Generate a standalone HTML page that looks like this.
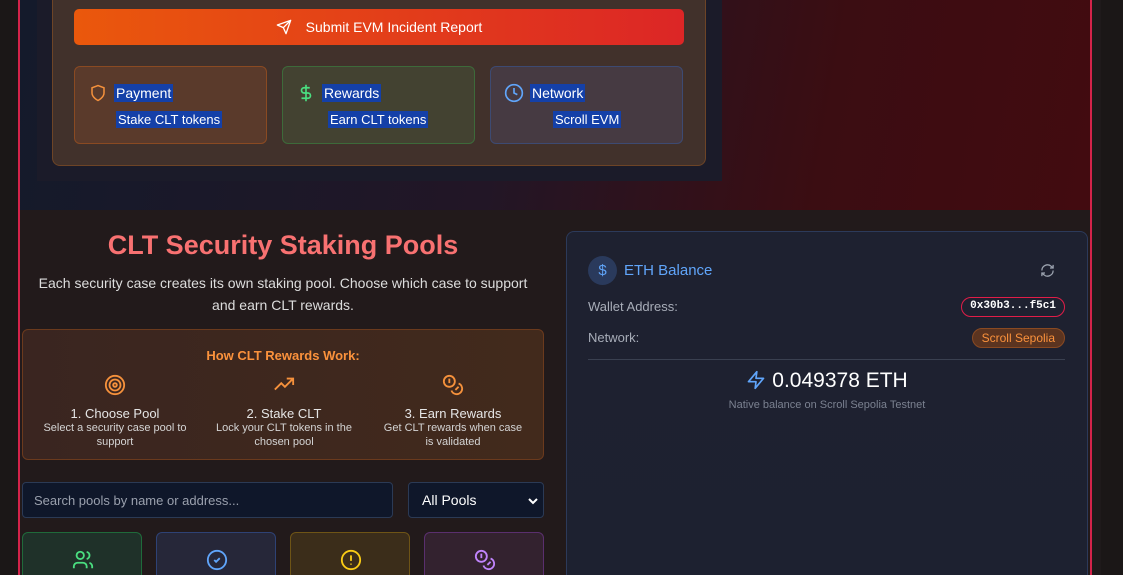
<!DOCTYPE html>
<html><head><meta charset="utf-8"><style>
*{box-sizing:border-box;margin:0;padding:0}
html,body{width:1123px;height:575px;overflow:hidden}
body{background:#1b1717;font-family:"Liberation Sans",sans-serif;position:relative;color:#fff}
.abs{position:absolute}
.frame{left:18px;top:0;width:1074px;height:575px;border-left:2px solid #d4234a;border-right:2px solid #d4234a;background:#221a1b}
.rs{left:1092px;top:0;width:9px;height:575px;background:#1f1a1b}
.top{left:20px;top:0;width:1070px;height:210px;background:linear-gradient(100deg,#141a2b 0%,#221626 45%,#3b0d12 75%,#420b10 100%)}
.inner{left:37px;top:0;width:685px;height:181px;background:#1b1b29}
.card{left:52px;top:-10px;width:654px;height:176px;background:#41312b;border:1px solid #6d4426;border-radius:8px}
.btn{left:74px;top:9px;width:610px;height:36px;border-radius:5px;background:linear-gradient(90deg,#ea580c,#dc2626);display:flex;align-items:center;justify-content:center;font-size:14px;gap:14px}
.box{top:66px;width:193px;height:78px;border-radius:6px;border:1px solid}
.sel{background:#1440a8;color:#fff}
.bt{position:absolute;top:17px;left:39px;font-size:14px;padding:1px 2px}
.bs{position:absolute;top:44px;font-size:13px;padding:1px 2px}
.ic{position:absolute;left:14px;top:16px}
h1{position:absolute;left:22px;width:522px;top:230px;text-align:center;font-size:27px;color:#f87171;font-weight:bold}
.sub{left:30px;width:506px;top:272px;text-align:center;font-size:14px;line-height:22px;color:#ddd}
.how{left:22px;top:329px;width:522px;height:131px;border:1px solid #6b3a1d;border-radius:6px;background:linear-gradient(90deg,#3a2520,#422a1c)}
.how h3{position:absolute;top:18px;width:100%;text-align:center;font-size:13px;color:#fb923c;font-weight:bold}
.step{position:absolute;top:44px;width:180px;text-align:center}
.step .t{font-size:13px;color:#e5e5e5;margin-top:5px}
.step .d{font-size:11px;color:#d4d4d4;line-height:14px}
.search{left:22px;top:482px;width:371px;height:36px;background:#0f172a;border:1px solid #2b3a55;border-radius:4px;font-size:13px;color:#9aa0ad;padding:10px 11px}
.select{left:408px;top:482px;width:136px;height:36px;background:#0f172a;border:1px solid #2b3a55;border-radius:4px;font-size:14px;color:#fff;padding:9px 13px}
.st{top:532px;width:120px;height:60px;border-radius:6px;border:1px solid}
.eth{left:566px;top:231px;width:522px;height:360px;background:linear-gradient(180deg,#1e2130,#1d2130);border:1px solid #2c3a5a;border-radius:8px}
.row{position:absolute;left:21px;font-size:13px;color:#a8adb8}
</style></head><body>
<div class="abs frame"></div>
<div class="abs rs"></div>
<div class="abs top"></div>
<div class="abs inner"></div>
<div class="abs card"></div>
<div class="abs btn"><svg width="16" height="16" viewBox="0 0 24 24" fill="none" stroke="#fff" stroke-width="2" stroke-linejoin="round"><path d="M22 2L11 13M22 2l-7 20-4-9-9-4z"/></svg><span>Submit EVM Incident Report</span></div>

<div class="abs box" style="left:74px;background:#5a3a2b;border-color:#8a4a22">
<svg class="ic" width="18" height="20" viewBox="0 0 24 24" fill="none" stroke="#f5913c" stroke-width="2"><path d="M12 22s8-4 8-10V5l-8-3-8 3v7c0 6 8 10 8 10z"/></svg>
<span class="bt sel">Payment</span><span class="bs sel" style="left:41px">Stake CLT tokens</span></div>
<div class="abs box" style="left:282px;background:#434231;border-color:#3d6a3a">
<svg class="ic" width="18" height="22" viewBox="0 0 24 24" fill="none" stroke="#4ade80" stroke-width="2.2" style="top:15px"><path d="M12 1v22M17 5H9.5a3.5 3.5 0 000 7h5a3.5 3.5 0 010 7H6"/></svg>
<span class="bt sel">Rewards</span><span class="bs sel" style="left:45px">Earn CLT tokens</span></div>
<div class="abs box" style="left:490px;background:#463a42;border-color:#3d4a72">
<svg class="ic" width="20" height="20" viewBox="0 0 24 24" fill="none" stroke="#60a5fa" stroke-width="2" style="left:13px"><circle cx="12" cy="12" r="10"/><path d="M12 6v6l4 2"/></svg>
<span class="bt sel">Network</span><span class="bs sel" style="left:62px">Scroll EVM</span></div>

<h1>CLT Security Staking Pools</h1>
<div class="abs sub">Each security case creates its own staking pool. Choose which case to support and earn CLT rewards.</div>

<div class="abs how"><h3>How CLT Rewards Work:</h3>
<div class="step" style="left:2px"><svg width="22" height="22" viewBox="0 0 24 24" fill="none" stroke="#f5913c" stroke-width="2"><circle cx="12" cy="12" r="10"/><circle cx="12" cy="12" r="6"/><circle cx="12" cy="12" r="2"/></svg><div class="t">1. Choose Pool</div><div class="d">Select a security case pool to<br>support</div></div>
<div class="step" style="left:171px"><svg width="22" height="22" viewBox="0 0 24 24" fill="none" stroke="#f5913c" stroke-width="2"><path d="M2 17l7-7 4 4 9-9M15 5h7v7"/></svg><div class="t">2. Stake CLT</div><div class="d">Lock your CLT tokens in the<br>chosen pool</div></div>
<div class="step" style="left:340px"><svg width="22" height="22" viewBox="0 0 24 24" fill="none" stroke="#f5913c" stroke-width="2"><circle cx="8" cy="8" r="6"/><path d="M18.1 10.4A6 6 0 1110.3 18M7 6h1v4M16.7 13.9l.7.7-2.8 2.8"/></svg><div class="t">3. Earn Rewards</div><div class="d">Get CLT rewards when case<br>is validated</div></div>
</div>

<div class="abs search">Search pools by name or address...</div>
<div class="abs select">All Pools<svg style="position:absolute;right:5px;top:14px" width="10" height="8" viewBox="0 0 10 8"><path d="M1 2l4 4 4-4" stroke="#fff" stroke-width="2" fill="none"/></svg></div>

<div class="abs st" style="left:22px;background:#1f3129;border-color:#1f6a3a"><svg style="position:absolute;left:49px;top:16px" width="22" height="22" viewBox="0 0 24 24" fill="none" stroke="#4ade80" stroke-width="2"><path d="M16 21v-2a4 4 0 00-4-4H6a4 4 0 00-4 4v2"/><circle cx="9" cy="7" r="4"/><path d="M22 21v-2a4 4 0 00-3-3.9M16 3.1a4 4 0 010 7.8"/></svg></div>
<div class="abs st" style="left:156px;background:#262739;border-color:#2e4275"><svg style="position:absolute;left:49px;top:16px" width="22" height="22" viewBox="0 0 24 24" fill="none" stroke="#60a5fa" stroke-width="2"><circle cx="12" cy="12" r="10"/><path d="M9 12l2 2 4-4"/></svg></div>
<div class="abs st" style="left:290px;background:#3b2d1a;border-color:#6e5416"><svg style="position:absolute;left:49px;top:16px" width="22" height="22" viewBox="0 0 24 24" fill="none" stroke="#facc15" stroke-width="2"><circle cx="12" cy="12" r="10"/><path d="M12 7v6M12 16v1"/></svg></div>
<div class="abs st" style="left:424px;background:#33222f;border-color:#5a2f6e"><svg style="position:absolute;left:49px;top:16px" width="22" height="22" viewBox="0 0 24 24" fill="none" stroke="#c084fc" stroke-width="2"><circle cx="8" cy="8" r="6"/><path d="M18.1 10.4A6 6 0 1110.3 18M7 6h1v4M16.7 13.9l.7.7-2.8 2.8"/></svg></div>

<div class="abs eth">
<div style="position:absolute;left:21px;top:24px;width:29px;height:29px;border-radius:50%;background:#2a3a5c;color:#60a5fa;font-size:15px;text-align:center;line-height:29px">$</div>
<div style="position:absolute;left:57px;top:30px;font-size:15px;color:#60a5fa">ETH Balance</div>
<svg style="position:absolute;left:473px;top:31px" width="15" height="15" viewBox="0 0 24 24" fill="none" stroke="#9ca3af" stroke-width="2"><path d="M3 12a9 9 0 0115-6.7L21 8M21 3v5h-5M21 12a9 9 0 01-15 6.7L3 16M3 21v-5h5"/></svg>
<div class="row" style="top:67px">Wallet Address:</div>
<div style="position:absolute;right:22px;top:65px;height:20px;padding:0 8px;border:1.5px solid #e11d48;border-radius:10px;font-family:'Liberation Mono',monospace;font-weight:bold;font-size:11px;line-height:17px;color:#fff">0x30b3...f5c1</div>
<div class="row" style="top:98px">Network:</div>
<div style="position:absolute;right:22px;top:96px;height:20px;padding:0 9px;background:#5b3420;border:1px solid #8a4a22;border-radius:10px;font-size:12px;line-height:18px;color:#fb923c">Scroll Sepolia</div>
<div style="position:absolute;left:21px;right:22px;top:127px;border-top:1px solid #3a4050"></div>
<div style="position:absolute;left:0;width:100%;top:137px;text-align:center;font-size:21px;color:#fff"><svg style="vertical-align:-3px;margin-right:6px" width="20" height="20" viewBox="0 0 24 24" fill="none" stroke="#60a5fa" stroke-width="2" stroke-linejoin="round"><path d="M13 2L3 14h9l-1 8 10-12h-9z"/></svg>0.049378 ETH</div>
<div style="position:absolute;left:0;width:100%;top:167px;text-align:center;font-size:11px;color:#7b8190">Native balance on Scroll Sepolia Testnet</div>
</div>
</body></html>
